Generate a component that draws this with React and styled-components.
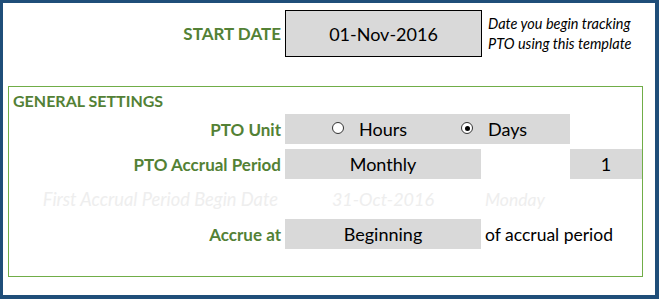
import styled, { createGlobalStyle } from "styled-components"

const GlobalStyle = createGlobalStyle`
  html, body {
    margin: 0;
    padding: 0;
    background: #fff;
  }
  body {
    font-family: Lato, "Open Sans", sans-serif;
  }
`

const Frame = styled.div`
  width: 659px;
  height: 299px;
  box-sizing: border-box;
  border-style: solid;
  border-color: #1f4e79;
  border-width: 3px 4px 4px 3px;
  padding: 7px 12px 0 5px;
  background: #fff;
`

const StartRow = styled.div`
  display: grid;
  grid-template-columns: 277px 197px 1fr;
  height: 47px;
`

const Label = styled.div`
  display: flex;
  align-items: center;
  justify-content: flex-end;
  padding-right: 4px;
  color: #538135;
  font-weight: 700;
  font-size: 17px;
  white-space: nowrap;
  ${(p) => p.$faded && `
    color: #eeeeee;
    font-weight: 400;
    font-style: italic;
    font-size: 18.3px;
    padding-right: 7px;
  `}
`

const DateBox = styled.div`
  display: flex;
  align-items: center;
  justify-content: center;
  box-sizing: border-box;
  border: 1px solid #000;
  background: #d9d9d9;
  font-size: 18px;
  color: #000;
`

const Hint = styled.div`
  display: flex;
  flex-direction: column;
  justify-content: center;
  padding-left: 6px;
  font-size: 14.5px;
  font-style: italic;
  line-height: 20px;
  color: #000;
  white-space: nowrap;
`

const Settings = styled.section`
  margin-top: 29px;
  border: 1px solid #70ad47;
  padding-bottom: 27px;
`

const Heading = styled.h2`
  margin: 0;
  padding-left: 4px;
  height: 27px;
  line-height: 28px;
  font-size: 16px;
  font-weight: 700;
  color: #538135;
`

const Grid = styled.div`
  display: grid;
  grid-template-columns: 276px 196px 89px 72px;
  grid-auto-rows: 30px;
  row-gap: 5px;
`

const Field = styled.div`
  grid-column: ${(p) => p.$span || "auto"};
  display: flex;
  align-items: center;
  justify-content: ${(p) => (p.$left ? "flex-start" : "center")};
  padding-left: ${(p) => (p.$left ? "47px" : "0")};
  background: ${(p) => (p.$faded ? "transparent" : "#d9d9d9")};
  font-size: 18px;
  color: ${(p) => (p.$faded ? "#eeeeee" : "#000")};
  font-style: ${(p) => (p.$faded ? "italic" : "normal")};
`

const Text = styled.div`
  display: flex;
  align-items: center;
  padding-left: 4px;
  font-size: 17.5px;
  color: ${(p) => (p.$faded ? "#eeeeee" : "#000")};
  font-style: ${(p) => (p.$faded ? "italic" : "normal")};
  white-space: nowrap;
`

const Empty = styled.div``

const Option = styled.label`
  display: flex;
  align-items: center;
  gap: 15px;
  width: ${(p) => p.$width || "auto"};
`

const Radio = styled.span`
  position: relative;
  width: 12px;
  height: 12px;
  box-sizing: border-box;
  border-radius: 50%;
  border: 1px solid #333;
  background: #fff;
  margin-top: -2px;
  &::after {
    content: "";
    display: ${(p) => (p.$checked ? "block" : "none")};
    position: absolute;
    left: 2.5px;
    top: 2.5px;
    width: 5px;
    height: 5px;
    border-radius: 50%;
    background: #000;
  }
`

export default function App() {
  return (
    <>
      <GlobalStyle />
      <Frame>
        <StartRow>
          <Label>START DATE</Label>
          <DateBox>01-Nov-2016</DateBox>
          <Hint>
            <span>Date you begin tracking</span>
            <span>PTO using this template</span>
          </Hint>
        </StartRow>

        <Settings>
          <Heading>GENERAL SETTINGS</Heading>
          <Grid>
            <Label>PTO Unit</Label>
            <Field $span="span 2" $left>
              <Option $width="129px">
                <Radio />
                Hours
              </Option>
              <Option>
                <Radio $checked />
                Days
              </Option>
            </Field>
            <Empty />

            <Label>PTO Accrual Period</Label>
            <Field>Monthly</Field>
            <Empty />
            <Field>1</Field>

            <Label $faded>First Accrual Period Begin Date</Label>
            <Field $faded>31-Oct-2016</Field>
            <Text $faded>Monday</Text>
            <Empty />

            <Label>Accrue at</Label>
            <Field>Beginning</Field>
            <Text>of accrual period</Text>
            <Empty />
          </Grid>
        </Settings>
      </Frame>
    </>
  )
}
